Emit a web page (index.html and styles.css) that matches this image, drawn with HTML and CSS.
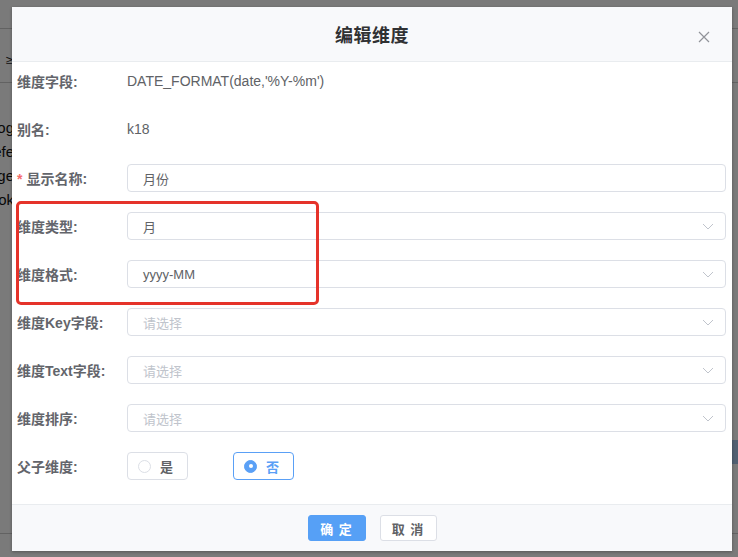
FILE: index.html
```html
<!DOCTYPE html>
<html lang="zh">
<head>
<meta charset="utf-8">
<title>编辑维度</title>
<link rel="stylesheet" href="styles.css">
</head>
<body>
<div class="page">
  <div class="page-top"></div>
  <div class="page-bar"><span class="page-mark">≥</span></div>
  <div class="page-list">
    <div class="page-item">catalog</div>
    <div class="page-item">prefe</div>
    <div class="page-item">page</div>
    <div class="page-item">book</div>
  </div>
  <div class="page-rest">
    <div class="page-btn"></div>
  </div>
  <div class="page-foot"></div>
</div>
<div class="mask"></div>
<div class="dialog">
  <div class="dlg-header">
    <span class="dlg-title">编辑维度</span>
    <svg class="dlg-close" width="12" height="12" viewBox="0 0 12 12"><path d="M1 1 L11 11 M11 1 L1 11" stroke="#909399" stroke-width="1.2" fill="none"/></svg>
  </div>
  <div class="dlg-body">
    <div class="row text-row">
      <div class="label">维度字段:</div>
      <div class="value">DATE_FORMAT(date,'%Y-%m')</div>
    </div>
    <div class="row text-row">
      <div class="label">别名:</div>
      <div class="value">k18</div>
    </div>
    <div class="row">
      <div class="label"><span class="req">*</span>显示名称:</div>
      <div class="field"><div class="input">月份</div></div>
    </div>
    <div class="row">
      <div class="label">维度类型:</div>
      <div class="field"><div class="input select">月<svg class="arrow" width="12" height="7" viewBox="0 0 12 7"><path d="M1 1 L6 6 L11 1" stroke="#c0c4cc" stroke-width="1" fill="none"/></svg></div></div>
    </div>
    <div class="row">
      <div class="label">维度格式:</div>
      <div class="field"><div class="input select">yyyy-MM<svg class="arrow" width="12" height="7" viewBox="0 0 12 7"><path d="M1 1 L6 6 L11 1" stroke="#c0c4cc" stroke-width="1" fill="none"/></svg></div></div>
    </div>
    <div class="row">
      <div class="label">维度Key字段:</div>
      <div class="field"><div class="input select placeholder">请选择<svg class="arrow" width="12" height="7" viewBox="0 0 12 7"><path d="M1 1 L6 6 L11 1" stroke="#c0c4cc" stroke-width="1" fill="none"/></svg></div></div>
    </div>
    <div class="row">
      <div class="label">维度Text字段:</div>
      <div class="field"><div class="input select placeholder">请选择<svg class="arrow" width="12" height="7" viewBox="0 0 12 7"><path d="M1 1 L6 6 L11 1" stroke="#c0c4cc" stroke-width="1" fill="none"/></svg></div></div>
    </div>
    <div class="row">
      <div class="label">维度排序:</div>
      <div class="field"><div class="input select placeholder">请选择<svg class="arrow" width="12" height="7" viewBox="0 0 12 7"><path d="M1 1 L6 6 L11 1" stroke="#c0c4cc" stroke-width="1" fill="none"/></svg></div></div>
    </div>
    <div class="row last">
      <div class="label">父子维度:</div>
      <div class="field radios">
        <div class="radio"><span class="dot"></span><span>是</span></div>
        <div class="radio checked"><span class="dot"></span><span>否</span></div>
      </div>
    </div>
    <div class="highlight"></div>
  </div>
  <div class="dlg-footer">
    <button class="btn primary">确 定</button>
    <button class="btn">取 消</button>
  </div>
</div>
</body>
</html>
```
FILE: styles.css
```css
* { box-sizing: border-box; }
html, body { margin: 0; padding: 0; }
body {
  width: 738px;
  height: 557px;
  overflow: hidden;
  position: relative;
  font-family: "Liberation Sans", "Noto Sans CJK SC", sans-serif;
  font-size: 14px;
  color: #606266;
  background: #fff;
}
.page {
  width: 738px;
  height: 557px;
  display: flex;
  flex-direction: column;
}
.page-top { height: 29px; border-bottom: 1px solid #ccc; }
.page-bar { height: 54px; border-bottom: 1px solid #ccc; padding-top: 22px; }
.page-mark { font-size: 12px; color: #222; margin-left: 6px; }
.page-list { display: flex; flex-direction: column; padding-top: 33px; width: 14px; }
.page-item {
  height: 24px;
  line-height: 24px;
  font-size: 15px;
  color: #111;
  display: flex;
  justify-content: flex-end;
  white-space: nowrap;
  width: 14px;
}
.page-rest { flex: 1; display: flex; justify-content: flex-end; padding-top: 228px; }
.page-btn { width: 20px; height: 24px; background: #a9c9ee; }
.page-foot { height: 24px; border-top: 1px solid #ccc; }
.mask {
  position: absolute;
  inset: 0;
  background: rgba(0, 0, 0, 0.52);
}
.dialog {
  position: absolute;
  left: 12px;
  top: 7px;
  width: 720px;
  height: 544px;
  background: #fff;
  display: flex;
  flex-direction: column;
  box-shadow: 0 1px 3px rgba(0,0,0,0.3);
}
.dlg-header {
  height: 55px;
  background: #f8f9fb;
  border-bottom: 1px solid #e9ecef;
  display: flex;
  align-items: center;
  justify-content: center;
  position: relative;
}
.dlg-title {
  font-size: 18px;
  font-weight: 700;
  color: #303133;
  letter-spacing: 0.5px;
}
.dlg-close {
  position: absolute;
  right: 22px;
  top: 24px;
}
.dlg-body {
  flex: 1;
  padding: 6px 6px 0 5px;
  position: relative;
}
.row {
  display: flex;
  align-items: center;
  height: 28px;
  margin-bottom: 20px;
}
.row.text-row { padding-bottom: 3px; }
.row.last { margin-bottom: 0; }
.label {
  width: 110px;
  flex: none;
  font-weight: 600;
  color: #63656b;
  white-space: nowrap;
}
.req { color: #f56c6c; margin-right: 4px; }
.value { color: #606266; }
.field { flex: 1; }
.input {
  height: 28px;
  border: 1px solid #dcdfe6;
  border-radius: 4px;
  padding: 0 15px;
  display: flex;
  align-items: center;
  color: #606266;
  font-size: 13px;
  position: relative;
}
.input.placeholder { color: #c0c4cc; }
.arrow { position: absolute; right: 11px; top: 10px; }
.radios { display: flex; gap: 45px; }
.radio {
  width: 61px;
  height: 28px;
  border: 1px solid #dcdfe6;
  border-radius: 4px;
  display: flex;
  align-items: center;
  padding-left: 10px;
  gap: 9px;
  font-size: 13px;
  font-weight: 600;
  color: #606266;
}
.dot {
  width: 13px;
  height: 13px;
  border-radius: 50%;
  border: 1px solid #dcdfe6;
  background: #fff;
  position: relative;
}
.radio.checked { border-color: #5aa0f6; color: #5aa0f6; }
.radio.checked .dot { border-color: #5aa0f6; background: #5aa0f6; }
.radio.checked .dot::after {
  content: "";
  position: absolute;
  left: 3.5px;
  top: 3.5px;
  width: 4px;
  height: 4px;
  border-radius: 50%;
  background: #fff;
}
.highlight {
  position: absolute;
  left: 4px;
  top: 139px;
  width: 303px;
  height: 104px;
  border: 3px solid #e5332a;
  border-radius: 5px;
}
.dlg-footer {
  height: 47px;
  background: #f8f9fb;
  border-top: 1px solid #e9ecef;
  display: flex;
  align-items: center;
  justify-content: center;
  gap: 14px;
}
.btn {
  height: 26px;
  width: 57px;
  border: 1px solid #dcdfe6;
  border-radius: 3px;
  background: #fff;
  color: #606266;
  font-family: "Liberation Sans", "Noto Sans CJK SC", sans-serif;
  font-size: 13px;
  font-weight: 700;
  padding: 0;
  letter-spacing: 1px;
}
.btn.primary {
  width: 58px;
  background: #56a0f6;
  border-color: #56a0f6;
  color: #fff;
}
```
